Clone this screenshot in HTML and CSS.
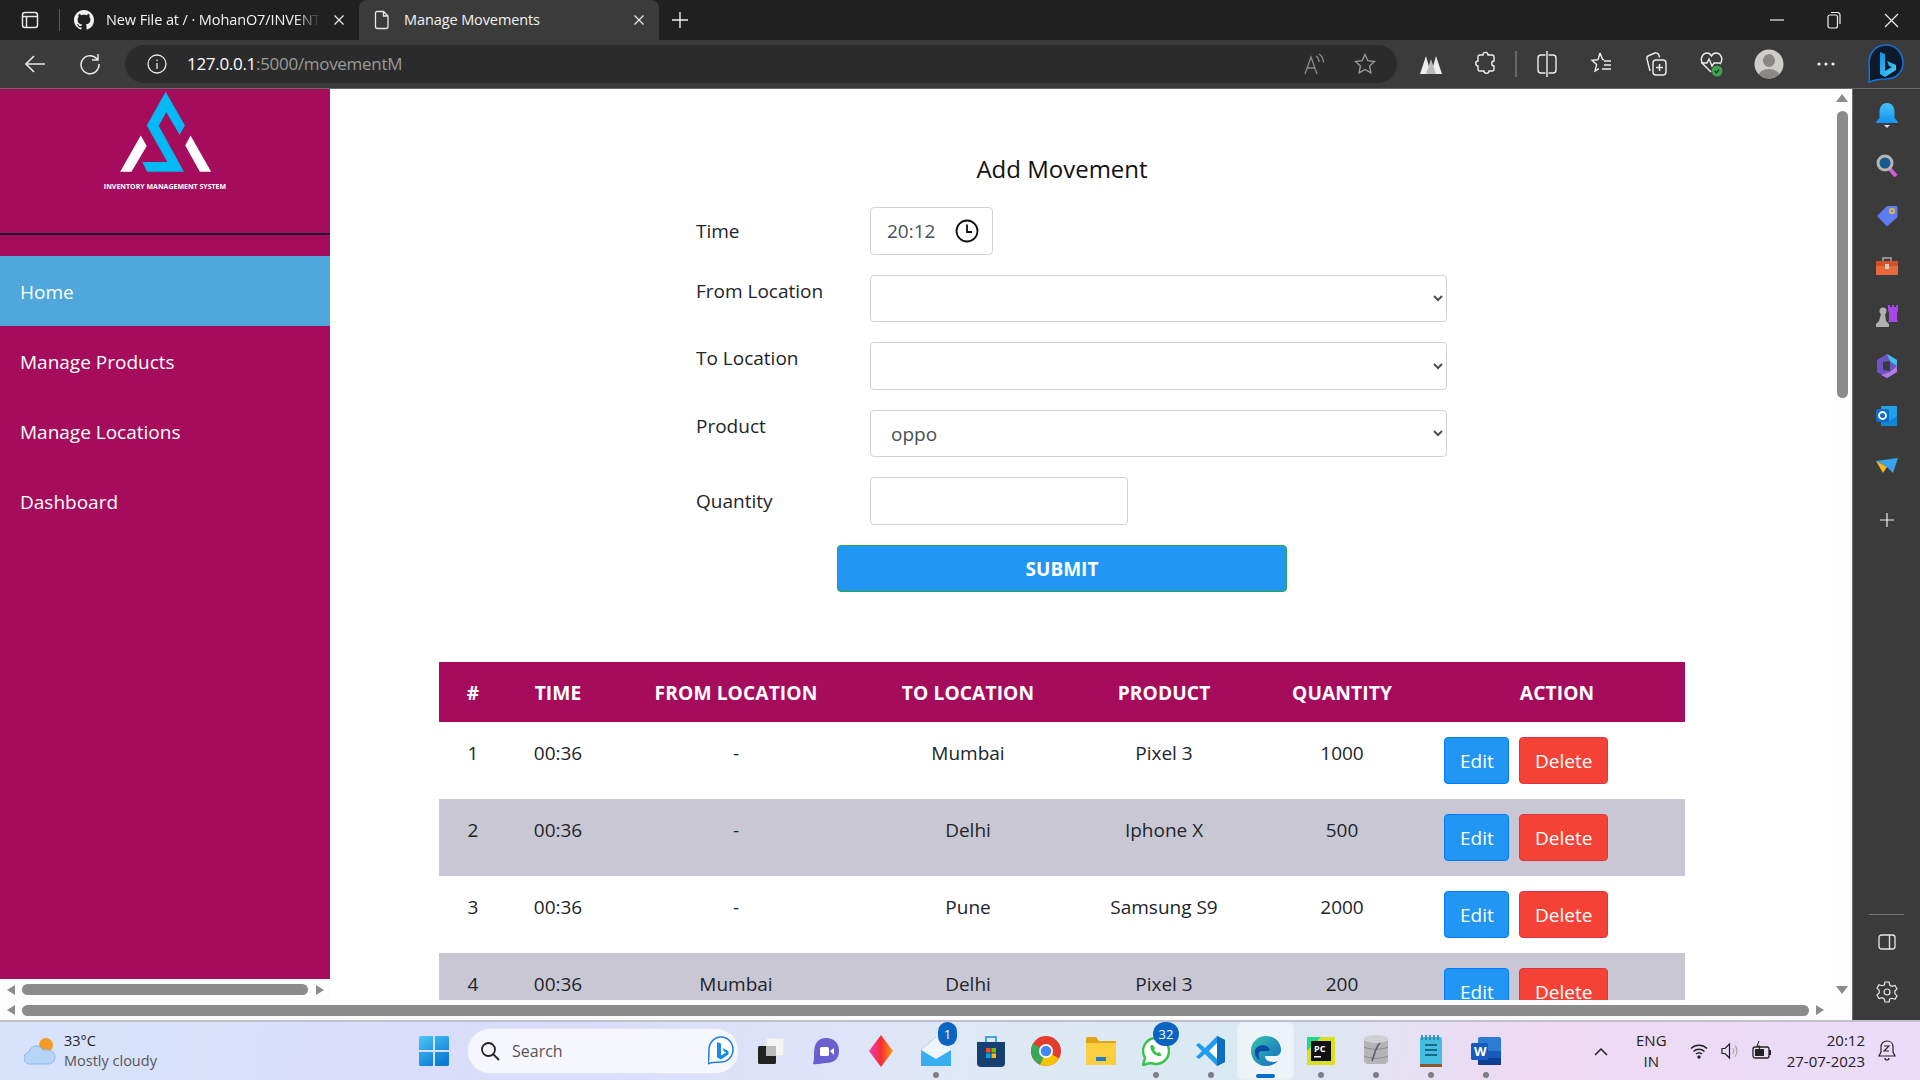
FILE: index.html
```html
<!DOCTYPE html>
<html lang="en">
<head>
  <meta charset="UTF-8">
  <meta name="viewport" content="width=device-width, initial-scale=1.0">
  <title>Manage Movements</title>
  <link rel="stylesheet" href="styles.css">
</head>
<body>

  <!-- Tab strip -->
  <div class="tabstrip">
    <svg class="strip-icon" width="20" height="20" viewBox="0 0 20 20" fill="none" stroke="#e8e8e8" stroke-width="1.5"><rect x="2.5" y="2.5" width="15" height="15" rx="2.5"/><path d="M2.5 6.5h15M6.5 6.5v11"/></svg>
    <span class="strip-sep"></span>
    <div class="tab">
      <svg width="20" height="20" viewBox="0 0 16 16" fill="#f2f2f2"><path d="M8 0C3.6 0 0 3.6 0 8c0 3.5 2.3 6.5 5.5 7.6.4.1.5-.2.5-.4v-1.4c-2.2.5-2.7-1-2.7-1-.4-.9-.9-1.2-.9-1.2-.7-.5.1-.5.1-.5.8.1 1.2.8 1.2.8.7 1.2 1.9.9 2.3.7.1-.5.3-.9.5-1.1-1.8-.2-3.6-.9-3.6-4 0-.9.3-1.6.8-2.1-.1-.2-.4-1 .1-2.1 0 0 .7-.2 2.2.8.6-.2 1.3-.3 2-.3s1.4.1 2 .3c1.5-1 2.2-.8 2.2-.8.4 1.1.2 1.9.1 2.1.5.6.8 1.3.8 2.1 0 3.1-1.9 3.7-3.7 3.9.3.3.6.8.6 1.5v2.2c0 .2.1.5.6.4A8 8 0 0 0 16 8c0-4.4-3.6-8-8-8z"/></svg>
      <span class="tab-title">New File at / · MohanO7/INVENT</span>
      <svg class="tab-close" width="12" height="12" viewBox="0 0 12 12" stroke="#e8e8e8" stroke-width="1.3"><path d="M1.5 1.5l9 9M10.5 1.5l-9 9"/></svg>
    </div>
    <div class="tab tab-active">
      <svg width="20" height="20" viewBox="0 0 20 20" fill="none" stroke="#e8e8e8" stroke-width="1.3"><path d="M4.5 1.500h7l4.500 4.500v10.500a2 2 0 0 1-2 2H5.500a2 2 0 0 1-2-2v-13a2 2 0 0 1 1-2zM11.500 1.500V6H16"/></svg>
      <span class="tab-title">Manage Movements</span>
      <svg class="tab-close" width="12" height="12" viewBox="0 0 12 12" stroke="#e8e8e8" stroke-width="1.3"><path d="M1.5 1.5l9 9M10.5 1.5l-9 9"/></svg>
    </div>
    <svg class="new-tab" width="18" height="18" viewBox="0 0 18 18" stroke="#eee" stroke-width="1.4"><path d="M9 1v16M1 9h16"/></svg>
    <div class="window-controls">
      <svg width="14" height="14" viewBox="0 0 14 14" stroke="#eee" stroke-width="1.2"><path d="M0 7h14"/></svg>
      <svg width="14" height="18" viewBox="0 0 14 18" fill="none" stroke="#eee" stroke-width="1.2"><rect x="1" y="4" width="9.5" height="13" rx="2"/><path d="M4 1.500h6.500a2.500 2.500 0 0 1 2.500 2.500v9"/></svg>
      <svg width="15" height="15" viewBox="0 0 15 15" stroke="#eee" stroke-width="1.2"><path d="M1 1l13 13M14 1L1 14"/></svg>
    </div>
  </div>

  <!-- Address bar -->
  <div class="toolbar">
    <svg class="nav-back" width="22" height="20" viewBox="0 0 22 20" fill="none" stroke="#e8e8e8" stroke-width="1.6"><path d="M21 10H2M10 2l-8 8 8 8"/></svg>
    <svg class="nav-reload" width="22" height="22" viewBox="0 0 22 22" fill="none" stroke="#e8e8e8" stroke-width="1.5"><path d="M18 6a9 9 0 1 0 2 5M19 1v6h-6"/></svg>
    <div class="address">
      <svg width="20" height="20" viewBox="0 0 20 20" fill="none" stroke="#e8e8e8" stroke-width="1.300"><circle cx="10" cy="10" r="9"/><path d="M10 9v6M10 5.500v1.500"/></svg>
      <span class="url"><span class="url-host">127.0.0.1</span>:5000/movementM</span>
      <svg class="read-aloud" width="22" height="22" viewBox="0 0 22 22" fill="none" stroke="#8a8a8a" stroke-width="1.300"><path d="M1 21L7 4l6 17M3.500 15h7M12 3c2 1.500 3 3.500 3 6M15 1c3 2 4.500 5 4.500 8.500"/></svg>
      <svg class="fav-star" width="22" height="22" viewBox="0 0 22 22" fill="none" stroke="#999" stroke-width="1.400"><path d="M11 1.500l2.900 6.200 6.600.8-4.900 4.600 1.300 6.700L11 16.500l-5.900 3.300 1.300-6.700L1.500 8.500l6.600-.8z"/></svg>
    </div>
    <div class="tools">
      <svg class="tool" width="22" height="20" viewBox="0 0 22 20"><path d="M0 20L6 2l5 18z" fill="#eee"/><path d="M22 20L16 2l-5 18z" fill="#eee"/><path d="M6 20l5-15 5 15z" fill="#bbb"/></svg>
      <svg class="tool" width="20" height="26" viewBox="0 0 20 26" fill="none" stroke="#eee" stroke-width="1.400"><path d="M8 4c0-3.500 5-3.500 5 0h4a2 2 0 0 1 2 2v4c-3 0-3 5 0 5v3a2 2 0 0 1-2 2h-3c0 3-5 3-5 0H5a2 2 0 0 1-2-2v-3c-3 0-3-5 0-5V6a2 2 0 0 1 2-2z"/></svg>
      <span class="tool-sep"></span>
      <svg class="tool" width="20" height="26" viewBox="0 0 20 26" fill="none" stroke="#eee" stroke-width="1.400"><rect x="1" y="4" width="18" height="18" rx="3"/><path d="M10 0v26" stroke="#3b3b3b" stroke-width="3"/><path d="M10 0v26"/></svg>
      <svg class="tool" width="22" height="24" viewBox="0 0 22 24" fill="none" stroke="#eee" stroke-width="1.400"><path d="M10 1l2.700 6.500 1.300.1M8 7.700l-6 .6 4.600 4.300L5 19l4-2.400M8 7.700L10 1M14 9h7M14 13h7M12 17h9"/></svg>
      <svg class="tool" width="22" height="26" viewBox="0 0 22 26" fill="none" stroke="#eee" stroke-width="1.400"><rect x="8" y="9" width="13" height="15" rx="3"/><path d="M14.500 13v7M11 16.500h7M5 20L2 8a3 3 0 0 1 2-3.500L10 2c2-.5 3.500.5 4 2.500l.5 2"/></svg>
      <svg class="tool" width="24" height="26" viewBox="0 0 24 26" fill="none"><path d="M11 21L3 13C-1 8 3 2 7 2c2.500 0 4 2 4.500 3C12 4 13.500 2 16 2c4.500 0 8 6 4 11" stroke="#eee" stroke-width="1.400"/><path d="M1 12h6l2-4 3 7 2-3h6" stroke="#eee" stroke-width="1.400"/><circle cx="17" cy="20" r="5.500" fill="#3fa34d"/><path d="M14.800 20l1.600 1.600 2.800-3" stroke="#123" stroke-width="1.200"/></svg>
      <svg class="tool-avatar" width="30" height="30" viewBox="0 0 30 30"><defs><clipPath id="avatar-clip"><circle cx="15" cy="15" r="14.500"/></clipPath></defs><circle cx="15" cy="15" r="14.500" fill="#cfcdc9"/><g clip-path="url(#avatar-clip)" fill="#8a8885"><ellipse cx="15" cy="11.500" rx="6" ry="6.500"/><ellipse cx="15" cy="28" rx="11" ry="8"/></g></svg>
      <svg class="tool" width="18" height="4" viewBox="0 0 18 4" fill="#eee"><circle cx="2" cy="2" r="1.600"/><circle cx="9" cy="2" r="1.600"/><circle cx="16" cy="2" r="1.600"/></svg>
      <svg class="tool" width="36" height="40" viewBox="0 0 36 40"><defs><linearGradient id="bing-fill" x1="0" y1="0" x2="1" y2="1"><stop offset="0" stop-color="#1590e6"/><stop offset="1" stop-color="#45d0f5"/></linearGradient></defs><path d="M18 1C8 1 1 9 1 19c0 6 1 11 0 19 5-2 8-3 17-3 10 0 17-7 17-16C35 9 28 1 18 1z" fill="#0c1a2a" stroke="#1570d8" stroke-width="1.600"/><path d="M12 8l5 2v17l7-4-3-1-2-5 9 4v5l-11 7-5-3z" fill="url(#bing-fill)"/></svg>
    </div>
  </div>

  <div class="browser-body">
    <div class="viewport">
      <div class="page-row">

        <!-- App sidebar -->
        <div class="sidebar">
          <div class="sidebar-fill">
            <div class="brand">
              <svg width="95" height="83" viewBox="110 15 285 250"><path d="M253 20L311 122 295 150 255 82 232 123 308 261H197L183 232H258L196 122z" fill="#00b9f5"/><path d="M178 152L196 184 150 261H116zM328 152L390 261H356L312 182z" fill="#fff"/></svg>
              <div class="brand-name">INVENTORY MANAGEMENT SYSTEM</div>
            </div>
            <nav class="side-nav">
              <a class="side-link active">Home</a>
              <a class="side-link">Manage Products</a>
              <a class="side-link">Manage Locations</a>
              <a class="side-link">Dashboard</a>
            </nav>
          </div>
          <div class="scroll-h scroll-h-inner">
            <span class="arrow arrow-left"></span>
            <span class="thumb-h thumb-inner"></span>
            <span class="arrow arrow-right"></span>
          </div>
        </div>

        <!-- Page content -->
        <div class="content">
          <h2 class="form-title">Add Movement</h2>
          <form class="movement-form">
            <div class="form-row">
              <label class="form-label">Time</label>
              <div class="field field-time">
                <span>20:12</span>
                <svg width="24" height="24" viewBox="0 0 24 24" fill="none" stroke="#111" stroke-width="1.800"><circle cx="12" cy="12" r="10.500"/><path d="M12 5.500V13h5"/></svg>
              </div>
            </div>
            <div class="form-row form-row-top">
              <label class="form-label">From Location</label>
              <select class="field field-select"><option></option></select>
            </div>
            <div class="form-row form-row-top">
              <label class="form-label">To Location</label>
              <select class="field field-select field-tall"><option></option></select>
            </div>
            <div class="form-row form-row-top">
              <label class="form-label">Product</label>
              <select class="field field-select"><option>oppo</option></select>
            </div>
            <div class="form-row">
              <label class="form-label">Quantity</label>
              <input class="field field-qty" type="number">
            </div>
            <button class="submit-btn" type="button">SUBMIT</button>
          </form>

          <table class="movements">
            <colgroup>
              <col class="col-num"><col class="col-time"><col class="col-from"><col class="col-to"><col class="col-product"><col class="col-qty"><col class="col-action">
            </colgroup>
            <thead>
              <tr><th>#</th><th>TIME</th><th>FROM LOCATION</th><th>TO LOCATION</th><th>PRODUCT</th><th>QUANTITY</th><th>ACTION</th></tr>
            </thead>
            <tbody>
              <tr>
                <td>1</td><td>00:36</td><td>-</td><td>Mumbai</td><td>Pixel 3</td><td>1000</td>
                <td class="actions"><button class="btn btn-edit">Edit</button><button class="btn btn-delete">Delete</button></td>
              </tr>
              <tr>
                <td>2</td><td>00:36</td><td>-</td><td>Delhi</td><td>Iphone X</td><td>500</td>
                <td class="actions"><button class="btn btn-edit">Edit</button><button class="btn btn-delete">Delete</button></td>
              </tr>
              <tr>
                <td>3</td><td>00:36</td><td>-</td><td>Pune</td><td>Samsung S9</td><td>2000</td>
                <td class="actions"><button class="btn btn-edit">Edit</button><button class="btn btn-delete">Delete</button></td>
              </tr>
              <tr>
                <td>4</td><td>00:36</td><td>Mumbai</td><td>Delhi</td><td>Pixel 3</td><td>200</td>
                <td class="actions"><button class="btn btn-edit">Edit</button><button class="btn btn-delete">Delete</button></td>
              </tr>
            </tbody>
          </table>
        </div>

        <!-- Page scrollbar -->
        <div class="scroll-v">
          <span class="arrow arrow-up"></span>
          <span class="thumb-v"></span>
          <span class="arrow arrow-down"></span>
        </div>
      </div>

      <div class="scroll-h scroll-h-page">
        <span class="arrow arrow-left"></span>
        <span class="thumb-h"></span>
        <span class="arrow arrow-right"></span>
      </div>
    </div>

    <!-- Edge sidebar -->
    <div class="edge-bar">
      <div class="edge-item"><svg width="24" height="28" viewBox="0 0 24 28"><defs><linearGradient id="bell-fill" x1="0" y1="0" x2="0" y2="1"><stop offset="0" stop-color="#45c4fa"/><stop offset="1" stop-color="#1590f0"/></linearGradient></defs><path d="M12 1c5 0 7.500 4 7.500 9v6l3.500 4v1H1v-1l3.500-4v-6C4.500 5 7 1 12 1z" fill="url(#bell-fill)"/><path d="M9 23h6l-3 3z" fill="#ddd"/></svg></div>
      <div class="edge-item"><svg width="22" height="24" viewBox="0 0 22 24"><path d="M13 14l7 8" stroke="#d35ae0" stroke-width="4"/><circle cx="9" cy="9" r="7" fill="#17598c" stroke="#b5b5b5" stroke-width="3"/></svg></div>
      <div class="edge-item"><svg width="22" height="22" viewBox="0 0 22 22"><path d="M11 1h9a1.500 1.500 0 0 1 1.500 1.500V12L11 21.500 1 11z" fill="#5e7df5"/><circle cx="16" cy="6" r="2.200" fill="none" stroke="#f5c518" stroke-width="1.500"/></svg></div>
      <div class="edge-item"><svg width="24" height="20" viewBox="0 0 24 20"><path d="M8 5V2h8v3" fill="none" stroke="#aaa" stroke-width="1.500"/><path d="M1 5h22v5H1z" fill="#d2502a"/><path d="M1 10h22v8a1 1 0 0 1-1 1H2a1 1 0 0 1-1-1z" fill="#e8693a"/><rect x="10" y="8" width="4" height="5" fill="#ccc"/></svg></div>
      <div class="edge-item"><svg width="24" height="24" viewBox="0 0 24 24"><path d="M14 2h2v2h2V2h2v2h2V2h2v6l-1 1v8l1 2H14l1-2V9l-1-1z" fill="#a946e8" transform="translate(-1 -1)"/><circle cx="8" cy="7" r="3.500" fill="#b0b0b0"/><path d="M6 10h4l1 7 3 3v3H1v-3l3-3z" fill="#b0b0b0"/></svg></div>
      <div class="edge-item"><svg width="22" height="24" viewBox="0 0 22 24"><path d="M11 0l10 6v12l-10 6-10-6V6z" fill="#6d55c8"/><path d="M11 0l10 6v6l-7-5z" fill="#3fc1e8"/><path d="M21 12v6l-10 6-6-3 9-3z" fill="#b17be0"/><path d="M7 8l7-1v10l-7-1z" fill="#3b3b3b"/></svg></div>
      <div class="edge-item"><svg width="22" height="22" viewBox="0 0 22 22"><rect x="5" y="1" width="16" height="19" rx="1" fill="#1fa3e6"/><path d="M5 11l8 5 8-5v10H5z" fill="#1284d6"/><rect x="0" y="4" width="13" height="13" rx="1.500" fill="#0f6cc4"/><circle cx="6.500" cy="10.500" r="3.500" fill="none" stroke="#fff" stroke-width="1.800"/></svg></div>
      <div class="edge-item"><svg width="22" height="16" viewBox="0 0 22 16"><path d="M0 3L22 0 17 15 11 9z" fill="#37a3ef"/><path d="M0 3l11 6-4 6z" fill="#f5b81d"/></svg></div>
      <div class="edge-item edge-plus"><svg width="14" height="14" viewBox="0 0 14 14" stroke="#eee" stroke-width="1.200"><path d="M7 0v14M0 7h14"/></svg></div>
      <div class="edge-bottom">
        <span class="edge-rule"></span>
        <svg width="18" height="16" viewBox="0 0 18 16" fill="none" stroke="#e8e8e8" stroke-width="1.300"><rect x="1" y="1" width="16" height="14" rx="2.500"/><path d="M11.500 1v14"/></svg>
        <svg class="edge-gear" width="22" height="22" viewBox="0 0 22 22" fill="none" stroke="#e8e8e8" stroke-width="1.200"><circle cx="11" cy="11" r="3"/><path d="M9 1h4l.7 3 2.300 1.300 3-.9 2 3.400-2.200 2.200v2.600l2.200 2.200-2 3.400-3-.9L13.700 18 13 21H9l-.7-3L6 16.700l-3 .9-2-3.400 2.200-2.200V9.400L1 7.200l2-3.400 3 .9L8.300 4z"/></svg>
      </div>
    </div>
  </div>

  <!-- Windows taskbar -->
  <div class="taskbar">
    <div class="weather">
      <svg width="32" height="30" viewBox="0 0 32 30"><circle cx="22" cy="9" r="7" fill="#f59a23"/><path d="M7 28a6 6 0 0 1-2-12c1-6 10-9 14-2 7-1 12 2 12 7 0 4-3 7-7 7z" fill="#b6d4f5" stroke="#8db8ea"/></svg>
      <div class="weather-text">
        <div class="weather-temp">33°C</div>
        <div class="weather-note">Mostly cloudy</div>
      </div>
    </div>
    <svg class="start-logo" width="30" height="30" viewBox="0 0 30 30"><defs><linearGradient id="win-fill" x1="0" y1="0" x2="0.600" y2="1"><stop offset="0" stop-color="#4cc6f7"/><stop offset="1" stop-color="#0a7cd4"/></linearGradient></defs><path d="M0 1.500A1.500 1.500 0 0 1 1.500 0H14v14H0zM16 0h12.500A1.500 1.500 0 0 1 30 1.500V14H16zM0 16h14v14H1.500A1.500 1.500 0 0 1 0 28.500zM16 16h14v12.500a1.500 1.500 0 0 1-1.500 1.500H16z" fill="url(#win-fill)"/></svg>
    <div class="task-search">
      <svg width="20" height="20" viewBox="0 0 20 20" fill="none" stroke="#222" stroke-width="1.800"><circle cx="8.500" cy="8.500" r="6.500"/><path d="M13.500 13.500L19 19"/></svg>
      <span class="task-search-text">Search</span>
      <svg class="search-bing" width="26" height="30" viewBox="0 0 26 30"><path d="M13 1C6 1 1 7 1 14c0 5 0 9-1 14 3-2 6-2 13-2 7 0 12-6 12-12.500C25 7 20 1 13 1z" fill="#fff" stroke="#1c7ce0" stroke-width="1.500"/><path d="M9 6l4 1.500v12l5-3-2-1-1.500-3.500 6 3v3.500l-7.500 5-4-2z" fill="#1c8ae6"/></svg>
    </div>
    <div class="task-apps">
      <div class="task-app"><svg width="26" height="26" viewBox="0 0 26 26"><rect x="8" y="0" width="18" height="18" fill="#f5f5f5" stroke="#ddd"/><rect x="0" y="8" width="18" height="18" rx="1.500" fill="#222"/><rect x="8" y="8" width="10" height="10" fill="#bbb"/></svg></div>
      <div class="task-app"><svg width="28" height="28" viewBox="0 0 28 28"><path d="M14 1c8 0 13 5 13 13s-5 12-13 12c-4 0-9 2-13 1 1-3 1-6 1-10C2 6 6 1 14 1z" fill="#6b5fd0"/><rect x="8" y="10" width="9" height="9" rx="1.500" fill="#fff"/><path d="M18 14l4-3v7z" fill="#fff"/></svg></div>
      <div class="task-app"><svg width="24" height="32" viewBox="0 0 24 32"><defs><linearGradient id="diamond-fill" x1="0" y1="0" x2="1" y2="0"><stop offset="0" stop-color="#f53ac0"/><stop offset="0.500" stop-color="#f52d35"/><stop offset="1" stop-color="#f5a010"/></linearGradient></defs><path d="M12 0l12 16-12 16L0 16z" fill="url(#diamond-fill)"/></svg></div>
      <div class="task-app has-dot"><svg width="30" height="30" viewBox="0 0 30 30"><path d="M0 14L15 1v13z" fill="#1c5fae"/><path d="M15 1l15 13v16H0V14z" fill="#eef6fc"/><path d="M0 14l15 9 15-9v16H0z" fill="#36aef0"/></svg><span class="task-badge">1</span></div>
      <div class="task-app"><svg width="28" height="32" viewBox="0 0 28 32"><path d="M9 8V2h10v6" fill="none" stroke="#3aa5e8" stroke-width="2"/><path d="M0 7h28v21a4 4 0 0 1-4 4H4a4 4 0 0 1-4-4z" fill="#173f72"/><path d="M9 13h4.500v4.500H9z" fill="#f25022"/><path d="M14.500 13H19v4.500h-4.500z" fill="#7fba00"/><path d="M9 18.500h4.500V23H9z" fill="#00a4ef"/><path d="M14.500 18.500H19V23h-4.500z" fill="#ffb900"/></svg></div>
      <div class="task-app"><svg width="30" height="30" viewBox="0 0 30 30"><circle cx="15" cy="15" r="15" fill="#e33b2e"/><path d="M15 15L28 22.500A15 15 0 0 1 9 28.700z" fill="#f7c200"/><path d="M15 15L9 28.700A15 15 0 0 1 2 7.500z" fill="#3aa757"/><circle cx="15" cy="15" r="7" fill="#fff"/><circle cx="15" cy="15" r="5.300" fill="#4285f4"/></svg></div>
      <div class="task-app"><svg width="30" height="28" viewBox="0 0 30 28"><path d="M0 2a2 2 0 0 1 2-2h8l3 4h17v8H0z" fill="#e0a416"/><path d="M0 6h30v22H0z" fill="#fbcf3d"/><path d="M10 20h10v4H10z" fill="#1b7fd0"/></svg></div>
      <div class="task-app has-dot"><svg width="28" height="30" viewBox="0 0 28 30"><path d="M14 2a13 13 0 0 1 0 26c-3 0-5-1-6-1l-7 2 2-7C2 20 1 18 1 15A13 13 0 0 1 14 2z" fill="#fff" stroke="#3ac34c" stroke-width="2.500"/><path d="M9 9c-2 3 1 7 3 9 3 2 6 3 8 1l-3-3-2 1-3-3 1-2-2-3z" fill="#3ac34c"/></svg><span class="task-badge task-badge-wide">32</span></div>
      <div class="task-app has-dot"><svg width="30" height="30" viewBox="0 0 30 30"><path d="M21 0l8 4v22l-8 4L9 18l-6 5-3-2 6-6-6-6 3-2 6 5z" fill="#1f9cf0"/><path d="M21 7l-8 8 8 8z" fill="#fff"/><path d="M21 0l8 4v22l-8 4z" fill="#0d6fbd"/></svg></div>
      <div class="task-app task-active"><svg width="30" height="30" viewBox="0 0 30 30"><defs><linearGradient id="edge-fill" x1="0" y1="0" x2="1" y2="1"><stop offset="0" stop-color="#36c5a8"/><stop offset="1" stop-color="#1467c6"/></linearGradient></defs><path d="M15 0c9 0 15 6 15 14 0 4-3 6-6 6H14c0 4 4 6 8 6 2 0 4-.5 5-1-3 3-7 5-12 5C6 30 0 23 0 15 0 6 7 0 15 0z" fill="url(#edge-fill)"/><path d="M4 14c2-5 9-6 13-3 2 1.500 2 3 1 4H11C8 15 6 18 9 24 5 22 3 18 4 14z" fill="#0b4aa8"/></svg></div>
      <div class="task-app has-dot"><svg width="28" height="28" viewBox="0 0 28 28"><rect width="28" height="28" fill="#d9e021"/><path d="M0 0h14L0 14z" fill="#21d789"/><rect x="4" y="4" width="20" height="20" fill="#111"/><text class="pc-mark" x="7" y="15">PC</text><rect x="7" y="19" width="7" height="1.500" fill="#fff"/></svg></div>
      <div class="task-app has-dot"><svg width="26" height="32" viewBox="0 0 26 32"><rect x="1" y="3" width="24" height="26" rx="4" fill="#b4b4b8"/><ellipse cx="13" cy="4" rx="12" ry="4" fill="#d0d0d4"/><path d="M1 12c6 3 18 3 24 0M1 21c6 3 18 3 24 0" stroke="#8a8a90" fill="none"/><path d="M17 8c-4 3-5 10-8 18" stroke="#555" fill="none" stroke-width="1.500"/></svg></div>
      <div class="task-app has-dot"><svg width="22" height="32" viewBox="0 0 22 32"><rect y="2" width="22" height="28" rx="2" fill="#45bde0"/><path d="M2 0v5M6 0v5M10 0v5M14 0v5M18 0v5" stroke="#1a7ea3" stroke-width="1.500"/><path d="M5 10h12M5 15h12M5 20h12" stroke="#126d8d" stroke-width="2"/><rect y="29" width="22" height="3" fill="#8a5a2b"/></svg></div>
      <div class="task-app has-dot"><svg width="30" height="28" viewBox="0 0 30 28"><rect x="7" y="0" width="23" height="28" rx="2" fill="#2b7cd3"/><rect x="7" y="14" width="23" height="7" fill="#185abd"/><rect x="7" y="21" width="23" height="7" fill="#103f91"/><rect x="0" y="6" width="17" height="17" rx="1.500" fill="#185abd"/><text class="word-mark" x="3" y="19">W</text></svg></div>
    </div>
    <div class="tray">
      <svg class="tray-chevron" width="14" height="9" viewBox="0 0 14 9" fill="none" stroke="#222" stroke-width="1.500"><path d="M1 8l6-6 6 6"/></svg>
      <div class="tray-lang"><div>ENG</div><div>IN</div></div>
      <svg width="18" height="16" viewBox="0 0 18 16" fill="none" stroke="#222" stroke-width="1.400"><path d="M1 5.500a11.500 11.500 0 0 1 16 0M3.500 8.500a8 8 0 0 1 11 0M6 11a4.500 4.500 0 0 1 6 0"/><circle cx="9" cy="14" r="1" fill="#222"/></svg>
      <svg width="18" height="18" viewBox="0 0 18 18" fill="none" stroke="#222" stroke-width="1.200"><path d="M1 6.500h3L8.500 2v14L4 11.500H1z"/><path d="M11.500 6c1.300 1.700 1.300 4.300 0 6M14 3.500c2.500 3 2.500 8 0 11" stroke="#aaa"/></svg>
      <svg width="20" height="20" viewBox="0 0 20 20"><rect x="1" y="6" width="16" height="11" rx="2" fill="none" stroke="#222" stroke-width="1.300"/><rect x="3" y="8" width="9" height="7" fill="#222"/><rect x="17" y="9" width="2" height="5" fill="#222"/><path d="M7 0L5 5h3L7 9" fill="none" stroke="#222"/></svg>
      <div class="tray-clock"><div>20:12</div><div>27-07-2023</div></div>
      <svg width="18" height="22" viewBox="0 0 18 22" fill="none" stroke="#222" stroke-width="1.200"><path d="M9 1c4 0 6 3 6 6v5l2 4H1l2-4V7c0-3 2-6 6-6zM7 18a2 2 0 0 0 4 0"/><path d="M6 6h5l-5 5h5" stroke-width="1.100"/></svg>
    </div>
  </div>

</body>
</html>
```

FILE: styles.css
```css
/* Page base */
* {
  box-sizing: border-box;
}

html,
body {
  margin: 0;
  height: 1080px;
  overflow: hidden;
}

body {
  display: flex;
  flex-direction: column;
  font-family: "Open Sans", "Noto Sans", sans-serif;
  color: #212529;
}

/* Tab strip */
.tabstrip {
  height: 40px;
  flex: none;
  display: flex;
  align-items: center;
  padding-left: 20px;
  background-color: #202020;
  color: #f2f2f2;
  font-size: 14.5px;
}

.strip-sep {
  width: 1px;
  height: 22px;
  margin: 0 14px 0 19px;
  background-color: #5a5a5a;
}

.tab {
  width: 284px;
  height: 40px;
  display: flex;
  align-items: center;
  gap: 12px;
  padding-right: 13px;
}

.tab-active {
  width: 300px;
  margin-left: 1px;
  padding: 0 14px 0 13px;
  border-radius: 8px 8px 0 0;
  background-color: #3b3b3b;
}

.tab-title {
  flex: 1;
  overflow: hidden;
  padding-bottom: 2px;
  white-space: nowrap;
  letter-spacing: -0.1px;
}

.tab:not(.tab-active) .tab-title {
  -webkit-mask-image: linear-gradient(to right, #000 88%, transparent);
  mask-image: linear-gradient(to right, #000 88%, transparent);
}

.new-tab {
  margin-left: 12px;
}

.window-controls {
  margin-left: auto;
  display: flex;
  align-items: center;
  gap: 43px;
  padding-right: 21px;
}

/* Address bar */
.toolbar {
  height: 49px;
  flex: none;
  display: flex;
  align-items: center;
  padding-left: 24px;
  background-color: #3b3b3b;
  border-bottom: 1px solid #6a6a6a;
}

.nav-reload {
  margin-left: 33px;
}

.address {
  width: 1272px;
  height: 38px;
  margin-left: 24px;
  display: flex;
  align-items: center;
  padding: 0 21px 0 22px;
  border-radius: 19px;
  background-color: #2b2b2b;
}

.url {
  margin-left: 20px;
  padding-bottom: 2px;
  font-size: 17px;
  letter-spacing: -0.3px;
  color: #9a9a9a;
}

.url-host {
  color: #fff;
}

.read-aloud {
  margin-left: auto;
}

.fav-star {
  margin-left: 28px;
}

.tools {
  flex: 1;
  display: flex;
  align-items: center;
}

.tool {
  flex: none;
  margin-left: 33px;
}

.tools .tool:first-child {
  margin-left: 23px;
}

.tool-sep {
  width: 2px;
  height: 26px;
  flex: none;
  margin-left: 20px;
  background-color: #666;
}

.tool-sep + .tool {
  margin-left: 20px;
}

.tool-avatar {
  flex: none;
  margin-left: 30px;
}

/* Browser body */
.browser-body {
  flex: 1;
  display: flex;
  min-height: 0;
}

.viewport {
  flex: 1;
  min-width: 0;
  display: flex;
  flex-direction: column;
}

.page-row {
  height: 911px;
  display: flex;
  background-color: #fff;
}

/* App sidebar */
.sidebar {
  width: 330px;
  flex: none;
  display: flex;
  flex-direction: column;
}

.sidebar-fill {
  flex: 1;
  background-color: #a50c5c;
}

.brand {
  height: 146px;
  padding-top: 1px;
  text-align: center;
  border-bottom: 2px solid #1d1130;
}

.brand svg {
  display: block;
  margin: 0 auto;
}

.brand-name {
  margin-top: 9px;
  font-size: 7px;
  font-weight: 700;
  line-height: 9px;
  color: #fff;
}

.side-nav {
  margin-top: 21px;
}

.side-link {
  height: 70px;
  display: flex;
  align-items: center;
  padding: 2px 0 0 20px;
  font-size: 19px;
  color: #fff;
}

.side-link.active {
  background-color: #4fa7dc;
}

/* Scrollbars */
.scroll-h {
  height: 20px;
  flex: none;
  display: flex;
  align-items: center;
  gap: 6px;
  padding: 0 7px;
  background-color: #fdfdfd;
}

.scroll-h-page {
  padding-right: 28px;
}

.scroll-h-inner {
  height: 21px;
  padding-right: 6px;
}

.thumb-h {
  flex: 1;
  height: 11px;
  margin: 0 1px 0 1px;
  border-radius: 6px;
  background-color: #8b8b8b;
}

.thumb-inner {
  margin: 0 2px 0 1px;
}

.scroll-v {
  width: 20px;
  flex: none;
  display: flex;
  flex-direction: column;
  align-items: center;
  padding: 5px 0 6px;
  background-color: #fdfdfd;
}

.thumb-v {
  width: 11px;
  height: 287px;
  margin-top: 9px;
  border-radius: 6px;
  background-color: #8b8b8b;
}

.arrow {
  width: 0;
  height: 0;
  flex: none;
  border-style: solid;
  border-color: transparent;
}

.arrow-left {
  border-width: 5px 8px 5px 0;
  border-right-color: #8b8b8b;
}

.arrow-right {
  border-width: 5px 0 5px 8px;
  border-left-color: #8b8b8b;
}

.arrow-up {
  border-width: 0 6px 8px;
  border-bottom-color: #8b8b8b;
}

.arrow-down {
  margin-top: auto;
  border-width: 8px 6px 0;
  border-top-color: #8b8b8b;
}

/* Page content */
.content {
  flex: 1;
  min-width: 0;
  overflow: hidden;
  padding: 0 147px 0 109px;
}

.form-title {
  margin: 63px 0 22px;
  font-size: 24px;
  font-weight: 400;
  line-height: 33px;
  text-align: center;
  color: #111;
}

.movement-form {
  display: flex;
  flex-direction: column;
  gap: 20px;
  padding-left: 257px;
}

.form-row {
  display: flex;
  align-items: center;
  min-height: 47px;
}

.form-row-top {
  align-items: flex-start;
}

.form-row-top .form-label {
  margin-top: 2px;
}

.form-label {
  width: 174px;
  flex: none;
  padding-top: 1px;
  font-size: 19px;
  line-height: 27px;
  color: #212529;
}

.field {
  height: 48px;
  padding: 6px 16px;
  border: 1px solid #ced4da;
  border-radius: 4px;
  background-color: #fff;
  font-family: inherit;
  font-size: 19px;
  color: #495057;
}

.field-time {
  width: 123px;
  display: flex;
  align-items: center;
  justify-content: space-between;
  padding-right: 13px;
}

.field-select {
  width: 577px;
  height: 47px;
}

.field-tall {
  height: 48px;
}

.field-qty {
  width: 258px;
}

.submit-btn {
  width: 450px;
  height: 47px;
  margin-left: 141px;
  border: 1px solid #28a745;
  border-radius: 4px;
  background-color: #2196f3;
  font-family: inherit;
  font-size: 19px;
  font-weight: 700;
  color: #fff;
}

/* Movements table */
.movements {
  width: 1246px;
  margin-top: 70px;
  border-collapse: collapse;
  table-layout: fixed;
  font-size: 19px;
  text-align: center;
  color: #212529;
}

.col-num { width: 68px; }
.col-time { width: 102px; }
.col-from { width: 254px; }
.col-to { width: 210px; }
.col-product { width: 182px; }
.col-qty { width: 174px; }
.col-action { width: 256px; }

.movements th {
  height: 60px;
  padding: 0;
  background-color: #a50c5c;
  font-size: 19.2px;
  font-weight: 700;
  letter-spacing: 0.1px;
  color: #fff;
}

.movements td {
  height: 77px;
  padding: 0 0 15px;
}

.movements tbody tr:nth-child(even) {
  background-color: #c9c7d4;
}

.movements td.actions {
  padding: 0 0 0 15px;
  text-align: left;
}

.btn {
  height: 47px;
  padding: 0 15px;
  border-radius: 4px;
  border: 1px solid;
  font-family: inherit;
  font-size: 19px;
  color: #fff;
}

.btn-edit {
  width: 65px;
  background-color: #2196f3;
  border-color: #007bff;
}

.btn-delete {
  width: 89px;
  margin-left: 10px;
  background-color: #f44336;
  border-color: #dc3545;
}

/* Edge sidebar */
.edge-bar {
  width: 68px;
  flex: none;
  display: flex;
  flex-direction: column;
  align-items: center;
  padding-top: 2px;
  border-left: 1px solid #6a6a6a;
  background-color: #3b3b3b;
}

.edge-item {
  height: 50px;
  flex: none;
  display: flex;
  align-items: center;
}

.edge-plus {
  margin-top: 4px;
}

.edge-bottom {
  margin-top: auto;
  display: flex;
  flex-direction: column;
  align-items: center;
  gap: 19px;
  padding-bottom: 17px;
}

.edge-gear {
  margin-top: 12px;
}

.edge-rule {
  width: 35px;
  height: 1px;
  background-color: #777;
}

/* Windows taskbar */
.taskbar {
  height: 60px;
  flex: none;
  display: flex;
  align-items: center;
  border-top: 2px solid #bfc0cc;
  background: linear-gradient(100deg, #d7e3fb 0%, #dbdcfa 30%, #dfe8f6 50%, #d9e9f2 65%, #efd9f3 80%, #eadcf9 100%);
  color: #222;
}

.weather {
  width: 419px;
  flex: none;
  display: flex;
  align-items: center;
  gap: 8px;
  padding-left: 24px;
}

.weather-text {
  font-size: 14.5px;
  line-height: 20px;
}

.weather-note {
  color: #555;
}

.start-logo {
  flex: none;
}

.task-search {
  width: 272px;
  height: 46px;
  flex: none;
  display: flex;
  align-items: center;
  gap: 12px;
  margin-left: 18px;
  padding: 0 4px 0 12px;
  border: 1px solid #e3e4f2;
  border-radius: 23px;
  background-color: #f5f6fe;
}

.task-search-text {
  font-size: 16px;
  color: #555;
}

.search-bing {
  margin-left: auto;
}

.task-apps {
  flex: none;
  display: flex;
  margin-left: 4px;
}

.task-app {
  position: relative;
  width: 55px;
  height: 56px;
  flex: none;
  display: flex;
  align-items: center;
  justify-content: center;
  border-radius: 5px;
}

.has-dot::after {
  content: "";
  position: absolute;
  left: 25px;
  bottom: 1px;
  width: 6px;
  height: 6px;
  border-radius: 50%;
  background-color: #7d7d85;
}

.task-active {
  background-color: rgba(255, 255, 255, 0.5);
  box-shadow: 0 0 0 1px rgba(255, 255, 255, 0.35);
}

.task-active::after {
  content: "";
  position: absolute;
  left: 18px;
  bottom: 1px;
  width: 19px;
  height: 4px;
  border-radius: 2px;
  background-color: #0a6cc9;
}

.task-badge {
  position: absolute;
  top: -1px;
  right: 6px;
  width: 19px;
  height: 24px;
  border-radius: 12px;
  background-color: #0a64c2;
  font-size: 13px;
  line-height: 24px;
  text-align: center;
  color: #fff;
}

.task-badge-wide {
  right: 4px;
  width: 26px;
}

.pc-mark {
  font-size: 9px;
  font-weight: 700;
  fill: #fff;
}

.word-mark {
  font-size: 13px;
  font-weight: 700;
  fill: #fff;
}

.tray {
  flex: 1;
  display: flex;
  align-items: center;
  margin-left: 81px;
  padding-right: 24px;
  gap: 13px;
  font-size: 15px;
}

.tray-lang {
  margin-left: 15px;
  margin-right: 10px;
  text-align: center;
  line-height: 21px;
}

.tray-clock {
  margin-left: auto;
  text-align: right;
  line-height: 21px;
}
```
